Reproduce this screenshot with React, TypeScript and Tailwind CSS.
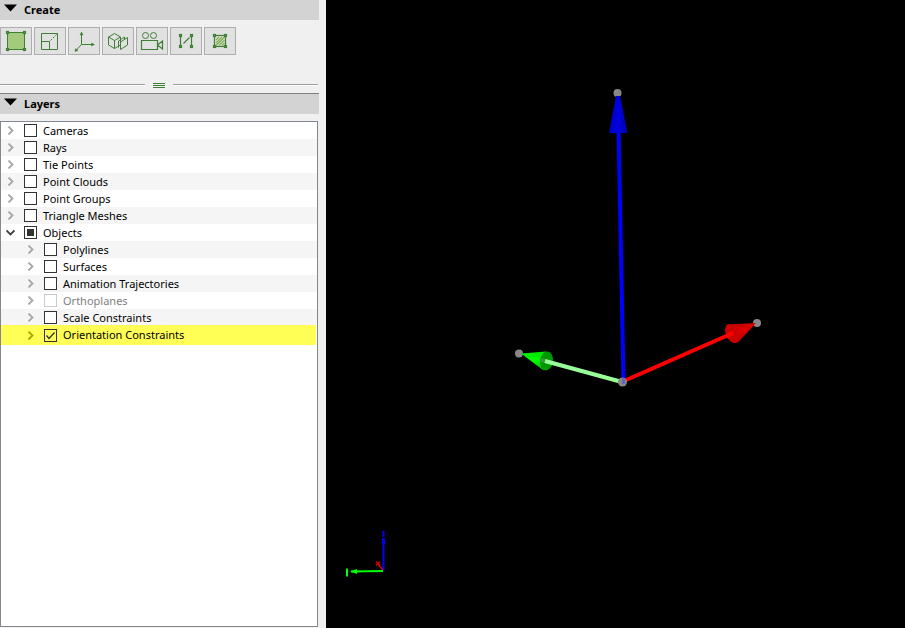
import { useState, type ReactNode } from "react";

type Layer = {
  name: string;
  state?: "checked" | "partial";
  disabled?: boolean;
  selected?: boolean;
  children?: Layer[];
};

const layers: Layer[] = [
  { name: "Cameras" },
  { name: "Rays" },
  { name: "Tie Points" },
  { name: "Point Clouds" },
  { name: "Point Groups" },
  { name: "Triangle Meshes" },
  {
    name: "Objects",
    state: "partial",
    children: [
      { name: "Polylines" },
      { name: "Surfaces" },
      { name: "Animation Trajectories" },
      { name: "Orthoplanes", disabled: true },
      { name: "Scale Constraints" },
      { name: "Orientation Constraints", state: "checked", selected: true },
    ],
  },
];

function Corners({ from, to }: { from: number; to: number }) {
  return (
    <g fill="#e1e1e1" strokeWidth="1.2">
      {[from, to].map((y) => [from, to].map((x) => <rect key={`${x}-${y}`} x={x - 1} y={y - 1} width="2" height="2" />))}
    </g>
  );
}

const tools: { label: string; icon: ReactNode }[] = [
  {
    label: "Surface",
    icon: (
      <>
        <rect x="3.5" y="3.5" width="17" height="17" fill="#a3cb7b" />
        <Corners from={3.5} to={20.5} />
      </>
    ),
  },
  {
    label: "Scale",
    icon: (
      <>
        <path d="M3.5 4.5h16v16h-16zM3.5 12.5h8v8" />
        <path d="M12.5 11.5l6-6" strokeDasharray="2 1.5" />
      </>
    ),
  },
  {
    label: "Orientation",
    icon: (
      <>
        <path d="M9.5 4v11.5H21M9.5 15.5l-5.5 6" />
        <path d="M9.5 3l-1.5 3h3zM22.5 15.5l-3-1.5v3zM3 22.5l.5-3 2.5 2z" fill="#3f7f35" strokeWidth="0.5" />
      </>
    ),
  },
  {
    label: "Orthoplane",
    icon: (
      <>
        <path d="M8.5 4.5l6 3.5v8l-6 3.5-6-3.5V8zM2.5 8l6 3.5 6-3.5M8.5 11.5v8" />
        <path d="M14.5 13l7-4.5v7.5l-7 4.5zM12.5 12v6.5M12.5 12l6-4v3" />
      </>
    ),
  },
  {
    label: "Animation",
    icon: (
      <>
        <circle cx="5.5" cy="6.5" r="3" />
        <circle cx="13.5" cy="6.5" r="3" />
        <path d="M1.5 11.5h16v9h-16zM17.5 16l5-4v8z" strokeWidth="1.2" />
      </>
    ),
  },
  {
    label: "Scale constraint",
    icon: (
      <>
        <path d="M6.5 6.5v11M17.5 6.5v11M9.5 14.5l6-6" strokeWidth="1.2" />
        <Corners from={6.5} to={17.5} />
      </>
    ),
  },
  {
    label: "Orthophoto area",
    icon: (
      <>
        <path d="M8 11l3-3M8 14l6-6M8 16.5L16.5 8M11 16.5l5.5-5.5M14 16.5l2.5-2.5" stroke="#7fb04e" strokeWidth="1.2" />
        <rect x="6.5" y="6.5" width="11" height="11" strokeWidth="1.2" />
        <Corners from={6.5} to={17.5} />
      </>
    ),
  },
];

function PanelHeader({ title, className = "" }: { title: string; className?: string }) {
  return (
    <h2 className={`mr-[7px] flex bg-[#d3d3d3] ${className}`}>
      <button type="button" className="flex h-5 items-center gap-[7px] pl-1 text-[11px] font-bold">
        <svg width="13" height="8" viewBox="0 0 13 8" className="mb-1" aria-hidden="true">
          <path d="M0 0.5h13l-6.5 7z" />
        </svg>
        {title}
      </button>
    </h2>
  );
}

function LayerRow({ layer, depth, open, onToggle }: { layer: Layer; depth: number; open?: boolean; onToggle?: () => void }) {
  const [state, setState] = useState(layer.state);
  const border = layer.disabled ? "border-[#cccccc]" : "border-[#333333]";

  return (
    <div
      className={`flex items-center pr-2 ${depth ? "pl-[23px]" : "pl-[3px]"} ${
        layer.selected ? "-mt-px mr-px h-5 bg-[#ffff55]" : "h-[17px]"
      }`}
    >
      <button
        type="button"
        aria-label={`Expand ${layer.name}`}
        aria-expanded={!!open}
        onClick={onToggle}
        className={`mr-[7px] flex size-[13px] items-center justify-center ${
          open ? "text-[#404040]" : layer.selected ? "text-[#a6a600]" : "text-[#a6a6a6]"
        }`}
      >
        <svg width="9" height="9" viewBox="0 0 9 9" fill="none" stroke="currentColor" strokeWidth="1.8" aria-hidden="true">
          <path d={open ? "M0.5 2.5l4 4 4-4" : "M2.5 0.5l4 4-4 4"} />
        </svg>
      </button>
      <label className={`flex items-center gap-1.5 ${layer.disabled ? "text-[#808080]" : "text-black"}`}>
        <span className="relative flex size-[13px]">
          <input
            type="checkbox"
            checked={state === "checked"}
            disabled={layer.disabled}
            onChange={(e) => setState(e.target.checked ? "checked" : undefined)}
            className={`size-[13px] appearance-none border ${border} ${layer.selected ? "bg-[#ffff55]" : "bg-white"}`}
          />
          {state === "partial" && <span className="pointer-events-none absolute inset-[3px] bg-[#333333]" />}
          {state === "checked" && (
            <svg viewBox="0 0 13 13" className="pointer-events-none absolute inset-0" fill="none" stroke="#333333" strokeWidth="1.3">
              <path d="M2.5 6.5l2.5 3 5.5-6" />
            </svg>
          )}
        </span>
        {layer.name}
      </label>
    </div>
  );
}

function LayerTree() {
  const [open, setOpen] = useState(true);
  const rows = layers.flatMap((layer) => [
    { layer, depth: 0 },
    ...(open && layer.children ? layer.children.map((child) => ({ layer: child, depth: 1 })) : []),
  ]);

  return (
    <ul className="mt-[7px] mr-2 mb-px flex-1 overflow-hidden border border-[#828790] bg-white text-[11px] leading-4">
      {rows.map(({ layer, depth }) => (
        <li key={layer.name} className="even:bg-[#f5f5f5]">
          <LayerRow
            layer={layer}
            depth={depth}
            open={!!layer.children && open}
            onToggle={layer.children ? () => setOpen(!open) : undefined}
          />
        </li>
      ))}
    </ul>
  );
}

function Viewport() {
  return (
    <main className="min-w-0 flex-1 bg-black">
      <svg viewBox="0 0 579 628" className="size-full" role="img" aria-label="3D view">
        <defs>
          <linearGradient id="blue">
            <stop offset="0" stopColor="#0000c0" />
            <stop offset="0.5" stopColor="#0000e0" />
            <stop offset="1" stopColor="#0000a8" />
          </linearGradient>
          <linearGradient id="red" x2="0.4" y2="1">
            <stop offset="0" stopColor="#a80000" />
            <stop offset="0.5" stopColor="#e00000" />
            <stop offset="1" stopColor="#b00000" />
          </linearGradient>
          <linearGradient id="green" x2="0" y2="1">
            <stop offset="0" stopColor="#00e000" />
            <stop offset="0.5" stopColor="#00ff00" />
            <stop offset="1" stopColor="#00b800" />
          </linearGradient>
        </defs>

        <g fill="#888888">
          <circle cx="291.5" cy="93" r="4" />
          <circle cx="431" cy="323" r="4" />
          <circle cx="193" cy="353.5" r="4" />
        </g>

        <path d="M292.5 130L297.5 380" stroke="#0000ff" strokeWidth="4" />
        <path d="M290 96h4L301.5 133H283z" fill="url(#blue)" />

        <path d="M430 323L402 324.500Q397 327 401 336Q406 343 412 342.500Z" fill="url(#red)" />
        <ellipse cx="406" cy="333.5" rx="6" ry="10" fill="#cc0000" transform="rotate(-24 406 333.5)" />
        <path d="M298 381L407 333" stroke="#ff0000" strokeWidth="4" />

        <path d="M195 353.5L220 351.5L222 370L217 370z" fill="url(#green)" />
        <ellipse cx="220.5" cy="361" rx="6.5" ry="9.5" fill="#009600" transform="rotate(8 220.5 361)" />
        <path d="M214 359.500l5 1.500" stroke="#339933" strokeWidth="4" />
        <path d="M219 361L296 382" stroke="#99ff99" strokeWidth="4" />

        <circle cx="296.5" cy="382" r="4.5" fill="#888888" />
        <path d="M297.5 378v6" stroke="#6666bb" strokeWidth="3" />

        <g fill="none" strokeWidth="2">
          <path d="M57.5 531v6M57.5 538v33" stroke="#0000ff" />
          <path d="M57.5 539v5" stroke="#0000ff" strokeWidth="3" />
          <path d="M20 569.500h2M21 569v7.500M25 571.5l32-.5" stroke="#00ff00" />
          <path d="M24 571.5l7-2.5v5z" fill="#00ff00" stroke="none" />
          <path d="M50 561.5l4 4M54 561.5l-4 4M52.5 565l4.5 5" stroke="#e00000" strokeWidth="1.5" />
        </g>
      </svg>
    </main>
  );
}

export default function App() {
  return (
    <div className="flex h-screen bg-[#f0f0f0] font-['Noto_Sans','Open_Sans',sans-serif] text-black">
      <aside className="flex w-[326px] shrink-0 flex-col">
        <PanelHeader title="Create" />
        <div className="mt-[7px] flex gap-0.5">
          {tools.map((tool) => (
            <button
              key={tool.label}
              type="button"
              aria-label={tool.label}
              className="flex h-7 w-8 items-center justify-center border border-[#adadad] bg-[#e1e1e1]"
            >
              <svg width="24" height="24" viewBox="0 0 24 24" fill="none" stroke="#3f7f35" className="shrink-0">
                {tool.icon}
              </svg>
            </button>
          ))}
        </div>

        <div className="mt-7 mr-2 mb-[5px] flex items-start gap-2">
          <div className="mt-px h-0.5 flex-1 border-t border-[#a0a0a0] bg-white" />
          <div className="flex w-3 flex-col gap-px">
            <div className="h-px bg-[#3f7f35]" />
            <div className="h-px bg-[#3f7f35]" />
            <div className="h-px bg-[#3f7f35]" />
          </div>
          <div className="mt-px h-0.5 flex-1 border-t border-[#a0a0a0] bg-white" />
        </div>

        <PanelHeader title="Layers" className="border-t border-[#808080]" />
        <LayerTree />
      </aside>
      <Viewport />
    </div>
  );
}
